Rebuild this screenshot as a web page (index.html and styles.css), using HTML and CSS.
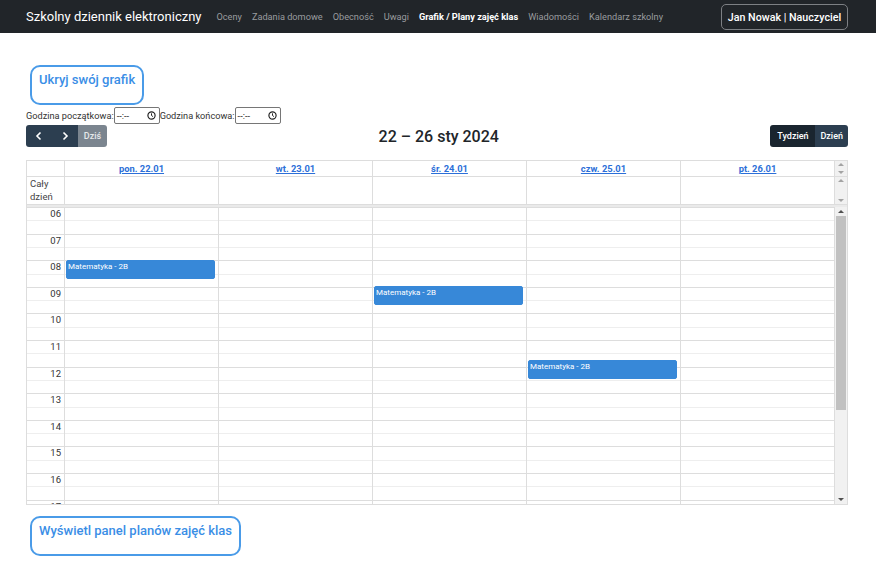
FILE: index.html
```html
<!DOCTYPE html>
<html lang="pl">
<head>
<meta charset="utf-8">
<title>Szkolny dziennik elektroniczny</title>
<link rel="stylesheet" href="styles.css">
</head>
<body>
<nav class="navbar">
  <a class="brand" href="#">Szkolny dziennik elektroniczny</a>
  <ul class="nav-links">
    <li><a href="#">Oceny</a></li>
    <li><a href="#">Zadania domowe</a></li>
    <li><a href="#">Obecność</a></li>
    <li><a href="#">Uwagi</a></li>
    <li><a class="active" href="#">Grafik / Plany zajęć klas</a></li>
    <li><a href="#">Wiadomości</a></li>
    <li><a href="#">Kalendarz szkolny</a></li>
  </ul>
  <button class="user-btn">Jan Nowak | Nauczyciel</button>
</nav>

<main class="page">
  <button class="outline-btn">Ukryj swój grafik</button>

  <div class="time-row">
    <label>Godzina początkowa:</label>
    <span class="time-input">--:--
      <svg viewBox="0 0 10 10" width="9" height="9"><circle cx="5" cy="5" r="4" fill="none" stroke="#222" stroke-width="1.3"/><path d="M5 2.6V5l1.6 1.2" fill="none" stroke="#222" stroke-width="1.1"/></svg>
    </span>
    <label>Godzina końcowa:</label>
    <span class="time-input">--:--
      <svg viewBox="0 0 10 10" width="9" height="9"><circle cx="5" cy="5" r="4" fill="none" stroke="#222" stroke-width="1.3"/><path d="M5 2.6V5l1.6 1.2" fill="none" stroke="#222" stroke-width="1.1"/></svg>
    </span>
  </div>

  <div class="toolbar">
    <div class="btn-group">
      <button class="cal-btn icon-btn"><svg viewBox="0 0 10 10" width="10" height="10"><path d="M6.5 1.5L3 5l3.5 3.5" fill="none" stroke="#fff" stroke-width="1.6"/></svg></button>
      <button class="cal-btn icon-btn"><svg viewBox="0 0 10 10" width="10" height="10"><path d="M3.5 1.5L7 5 3.5 8.5" fill="none" stroke="#fff" stroke-width="1.6"/></svg></button>
      <button class="cal-btn disabled">Dziś</button>
    </div>
    <h2 class="cal-title">22 – 26 sty 2024</h2>
    <div class="btn-group">
      <button class="cal-btn active">Tydzień</button>
      <button class="cal-btn">Dzień</button>
    </div>
  </div>

  <div class="calendar">
    <div class="cal-section cal-head">
      <div class="row-grid">
        <div class="cell axis"></div>
        <div class="cell day-head"><a href="#">pon. 22.01</a></div>
        <div class="cell day-head"><a href="#">wt. 23.01</a></div>
        <div class="cell day-head"><a href="#">śr. 24.01</a></div>
        <div class="cell day-head"><a href="#">czw. 25.01</a></div>
        <div class="cell day-head"><a href="#">pt. 26.01</a></div>
      </div>
      <div class="sbar light"><span class="arr up"></span><span class="track"></span><span class="arr down"></span></div>
    </div>
    <div class="cal-section cal-allday">
      <div class="row-grid">
        <div class="cell axis allday-label">Cały<br>dzień</div>
        <div class="cell"></div>
        <div class="cell"></div>
        <div class="cell"></div>
        <div class="cell"></div>
        <div class="cell"></div>
      </div>
      <div class="sbar light"><span class="arr up"></span><span class="track"></span><span class="arr down"></span></div>
    </div>
    <div class="divider"></div>
    <div class="cal-section cal-body">
      <div class="body-view">
        <div class="body-grid">
          <div class="axis-col">
            <div class="hour">06</div>
            <div class="hour">07</div>
            <div class="hour">08</div>
            <div class="hour">09</div>
            <div class="hour">10</div>
            <div class="hour">11</div>
            <div class="hour">12</div>
            <div class="hour">13</div>
            <div class="hour">14</div>
            <div class="hour">15</div>
            <div class="hour">16</div>
            <div class="hour">17</div>
            <div class="hour">18</div>
            <div class="hour">19</div>
            <div class="hour">20</div>
            <div class="hour">21</div>
          </div>
          <div class="day-col">
            <div class="event" style="top:53.2px;height:19px">Matematyka - 2B</div>
          </div>
          <div class="day-col"></div>
          <div class="day-col">
            <div class="event" style="top:78.5px;height:19px">Matematyka - 2B</div>
          </div>
          <div class="day-col">
            <div class="event" style="top:152.8px;height:19px">Matematyka - 2B</div>
          </div>
          <div class="day-col"></div>
        </div>
      </div>
      <div class="sbar"><span class="arr up"></span><span class="track"><span class="thumb"></span></span><span class="arr down"></span></div>
    </div>
  </div>

  <button class="outline-btn wide">Wyświetl panel planów zajęć klas</button>
</main>
</body>
</html>
```

FILE: styles.css
```css
* { box-sizing: border-box; }

body {
  margin: 0;
  font-family: Roboto, "Noto Sans", Arial, sans-serif;
  color: #212529;
  background: #fff;
}

/* navbar */
.navbar {
  height: 33px;
  background: #212529;
  display: flex;
  align-items: center;
  padding: 0 28px 0 26px;
}
.brand {
  color: #fff;
  text-decoration: none;
  font-size: 13px;
  margin-right: 10px;
  white-space: nowrap;
}
.nav-links {
  list-style: none;
  display: flex;
  margin: 0;
  padding: 0;
  flex: 1;
}
.nav-links a {
  display: block;
  padding: 0 5px;
  color: #999c9f;
  text-decoration: none;
  font-size: 9.2px;
  white-space: nowrap;
}
.nav-links a.active {
  color: #fff;
  font-weight: 700;
}
.user-btn {
  font-family: inherit;
  font-size: 10.7px;
  font-weight: 500;
  color: #fff;
  background: transparent;
  border: 1px solid #7d8084;
  border-radius: 5px;
  height: 26px;
  width: 127px;
  padding: 0;
  white-space: nowrap;
  margin-top: 1px;
}

/* page */
.page {
  padding: 32px 28px 0 26px;
}
.outline-btn {
  display: block;
  font-family: inherit;
  font-size: 13px;
  font-weight: 500;
  color: #3a8ee6;
  background: #fff;
  border: 2px solid #4a9be8;
  border-radius: 10px;
  height: 40px;
  padding: 0 7px 11px;
  margin-left: 4px;
}
.outline-btn.wide {
  margin-top: 11px;
}

.time-row {
  display: flex;
  align-items: center;
  margin-top: 2px;
  height: 17px;
  font-size: 9.2px;
  color: #333;
}
.time-input {
  display: inline-flex;
  align-items: center;
  justify-content: space-between;
  width: 46px;
  height: 17px;
  border: 1px solid #767676;
  border-radius: 2px;
  padding: 0 3px 0 2px;
  font-size: 9.2px;
  color: #222;
}

/* toolbar */
.toolbar {
  display: flex;
  align-items: center;
  justify-content: space-between;
  margin-top: 1px;
  height: 22px;
}
.btn-group {
  display: flex;
  border-radius: 3px;
  overflow: hidden;
}
.cal-btn {
  font-family: inherit;
  font-size: 9px;
  font-weight: 500;
  color: #fff;
  background: #2c3e50;
  border: 0;
  height: 22px;
  padding: 0 5px;
  display: flex;
  align-items: center;
  justify-content: center;
}
.icon-btn { width: 26px; }
.cal-btn.disabled {
  background: #7b858f;
  color: #e6e8ea;
  width: 29px;
}
.cal-btn.active { background: #1a252f; width: 45px; }
.cal-title {
  margin: 0;
  font-size: 16px;
  font-weight: 500;
  color: #212529;
}

/* calendar */
.calendar {
  margin-top: 13px;
  border: 1px solid #ddd;
  display: flex;
  flex-direction: column;
}
.cal-section {
  display: flex;
}
.row-grid, .body-grid {
  flex: 1;
  display: grid;
  grid-template-columns: 38px repeat(5, 1fr);
}
.cal-head { height: 16px; border-bottom: 1px solid #ddd; }
.cal-allday { height: 27px; }
.cell { border-right: 1px solid #ddd; }
.day-head {
  display: flex;
  align-items: center;
  justify-content: center;
}
.day-head a {
  color: #2c6fd8;
  font-size: 9.4px;
  font-weight: 700;
  text-decoration: underline;
}
.allday-label {
  font-size: 9.5px;
  line-height: 12.5px;
  color: #444;
  padding: 1px 0 0 3px;
}
.divider {
  height: 3px;
  background: #eaeaea;
  border-top: 1px solid #ddd;
}
.cal-body { height: 297px; }
.body-view {
  flex: 1;
  display: flex;
  overflow: hidden;
}
.body-grid {
  align-self: flex-start;
  background-image:
    repeating-linear-gradient(to bottom, #ddd 0, #ddd 1px, transparent 1px, transparent 13.3px, #eee 13.3px, #eee 14.3px, transparent 14.3px, transparent 26.6px);
}
.axis-col { border-right: 1px solid #ddd; }
.hour {
  height: 26.6px;
  font-size: 9.5px;
  line-height: 12px;
  color: #333;
  text-align: right;
  padding: 1px 3px 0 0;
}
.day-col {
  position: relative;
  border-right: 1px solid #ddd;
}
.event {
  position: absolute;
  left: 1px;
  right: 3px;
  background: #3788d8;
  border: 1px solid #3788d8;
  border-radius: 2px;
  color: #fff;
  font-size: 8px;
  line-height: 10px;
  padding: 1px 1px;
  overflow: hidden;
  white-space: nowrap;
}

/* fake scrollbars */
.sbar {
  width: 12px;
  flex: none;
  display: flex;
  flex-direction: column;
  background: #f1f1f1;
}
.sbar .arr {
  flex: none;
  height: 9px;
  display: flex;
  align-items: center;
  justify-content: center;
}
.sbar .arr::before {
  content: "";
  width: 0;
  height: 0;
  border-left: 3px solid transparent;
  border-right: 3px solid transparent;
}
.sbar .arr.up::before { border-bottom: 3px solid #505050; }
.sbar .arr.down::before { border-top: 3px solid #505050; }
.sbar.light .arr { height: 7px; }
.sbar.light .arr.up::before { border-bottom-color: #a3a3a3; }
.sbar.light .arr.down::before { border-top-color: #a3a3a3; }
.sbar .track {
  flex: 1;
  display: flex;
  flex-direction: column;
  padding: 0 1px;
}
.sbar .thumb {
  height: 194px;
  background: #c1c1c1;
}
```
